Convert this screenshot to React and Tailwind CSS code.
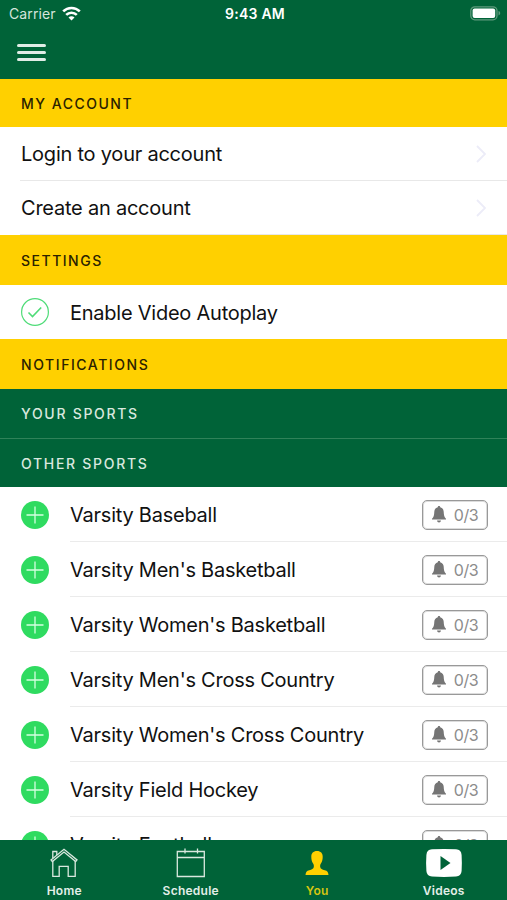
const SPORTS = [
  "Varsity Baseball",
  "Varsity Men's Basketball",
  "Varsity Women's Basketball",
  "Varsity Men's Cross Country",
  "Varsity Women's Cross Country",
  "Varsity Field Hockey",
  "Varsity Football",
];

function StatusBar() {
  return (
    <div className="grid h-7 grid-cols-3 items-center pr-[6px] pl-[9px] text-white">
      <div className="flex items-center gap-[6px]">
        <span className="text-[14px] leading-none tracking-[0.1px] text-[#d5e5dc]">Carrier</span>
        <svg className="-mt-[2px]" width="19" height="15" viewBox="0 0 19 15" fill="none" stroke="currentColor" strokeWidth="2.6">
          <path d="M1.2 5.400a11.800 11.800 0 0 1 16.600 0" />
          <path d="M4.200 8.900a7.500 7.500 0 0 1 10.600 0" />
          <path d="M9.500 14.500 6.500 11.500a4.200 4.200 0 0 1 6 0z" fill="currentColor" stroke="none" />
        </svg>
      </div>
      <span className="text-center text-[14px] leading-none font-semibold tracking-[0.250px] whitespace-nowrap">9:43 AM</span>
      <svg className="-mt-px justify-self-end" width="31" height="15" viewBox="0 0 31 15">
        <rect x="0.800" y="0.800" width="26.200" height="13" rx="4" fill="none" stroke="#5e9a7c" strokeWidth="1.300" />
        <rect x="2.600" y="2.600" width="22.600" height="9.400" rx="2" fill="#fff" />
        <path d="M28.500 5v4.400c1.100-.4 1.700-1.200 1.700-2.200s-.6-1.800-1.700-2.200z" fill="#5e9a7c" />
      </svg>
    </div>
  );
}

function Header() {
  return (
    <header className="h-[79px] shrink-0 bg-[#006338]">
      <StatusBar />
      <button aria-label="Menu" className="mt-4 ml-[17px] grid w-[29px] gap-[4.500px]">
        <span className="h-[2.500px] rounded-full bg-[#e0ede6]" />
        <span className="h-[2.500px] rounded-full bg-[#e0ede6]" />
        <span className="h-[2.500px] rounded-full bg-[#e0ede6]" />
      </button>
    </header>
  );
}

function SectionTitle({ children, className }) {
  return (
    <h2 className={`flex shrink-0 items-center pl-[21px] text-[14px] font-medium ${className}`}>
      {children}
    </h2>
  );
}

function AccountRow({ label }) {
  return (
    <div className="h-[54px] shrink-0 pl-5">
      <div className="flex h-full items-center justify-between border-b border-[#e8e8e8] pt-px pr-5 pl-px">
        <span className="text-[20px] tracking-[-0.230px]">{label}</span>
        <svg width="11" height="18" viewBox="0 0 11 18" fill="none" stroke="#ececf8" strokeWidth="1.800">
          <path d="m1 1 8 8-8 8" />
        </svg>
      </div>
    </div>
  );
}

function BellBadge() {
  return (
    <div className="flex h-[30px] w-[66px] items-center justify-center gap-[8px] rounded-[5px] border border-[#999] text-[#8c8c8c] shadow-[inset_0_0_0_1px_#dcdcdc]">
      <svg width="14" height="17" viewBox="0 0 14 17" fill="#757575">
        <path d="M7 0c.8 0 1.200.5 1.200 1.300 2.300.6 3.400 2.300 3.500 4.500.1 3.500.6 5.400 2.300 7v.8H0v-.8c1.700-1.600 2.200-3.500 2.300-7C2.400 3.600 3.500 1.900 5.800 1.300 5.800.5 6.200 0 7 0z" />
        <path d="M5 14.400h4c-.2 1.300-.9 2-2 2s-1.800-.7-2-2z" />
      </svg>
      <span className="text-[16px] leading-none tracking-[-0.400px]">0/3</span>
    </div>
  );
}

function SportRow({ name }) {
  return (
    <li className="flex h-[55px] shrink-0 pl-[21px]">
      <div className="flex w-[49px] shrink-0 items-center">
        <svg width="28" height="28" viewBox="0 0 28 28">
          <circle cx="14" cy="14" r="14" fill="#2fdb60" />
          <path d="M14 5.500v17M5.500 14h17" stroke="#d5ffe0" strokeWidth="1.300" />
        </svg>
      </div>
      <div className="flex flex-1 items-center justify-between border-b border-[#ebebeb] pt-px pr-[19px]">
        <span className="pt-px text-[20px] tracking-[-0.240px] whitespace-nowrap">{name}</span>
        <BellBadge />
      </div>
    </li>
  );
}

function HomeIcon() {
  return (
    <svg width="28" height="30" viewBox="0 0 28 30" fill="none" stroke="#d9e8df" strokeWidth="1.300">
      <path d="M1 11.900 14 1.300l13 10.600-1.300 1.600L14 4 2.300 13.500z" />
      <path d="M2.800 10V3.500h4v3.400M2.800 13V28.300h6.400V18.300h9v10h7V13" />
    </svg>
  );
}

function CalendarIcon() {
  return (
    <svg width="30" height="30" viewBox="0 0 30 30" fill="none" stroke="#d9e8df" strokeWidth="1.300">
      <path d="M1.300 3.500h27v25h-27zM1.300 9.500h27M9 .5v5M21.500.5v5" />
    </svg>
  );
}

function PersonIcon() {
  return (
    <svg width="24" height="24" viewBox="0 0 24 24" fill="#ffd000">
      <path d="M12 0c3.800 0 5.700 2.300 5.700 5.700 0 2.300-.4 4.800-1.800 6.800-.7 1.200-.9 2.200-.7 3.500.3 1.800 2 2.500 4.500 3.200 2.600.7 3.600 1.800 3.800 4.800H.5c.2-3 1.200-4.100 3.800-4.800 2.500-.7 4.200-1.400 4.500-3.200.2-1.300 0-2.300-.7-3.500-1.400-2-1.800-4.500-1.800-6.800C6.300 2.300 8.200 0 12 0z" />
    </svg>
  );
}

function VideoIcon() {
  return (
    <svg width="38" height="30" viewBox="0 0 38 30">
      <path d="M7 1.300Q19 .5 31 1.300 36.200 1.600 36.600 7q.5 8 0 16-.4 5.200-5.600 5.500-12 .8-24 0Q1.800 28.200 1.400 23q-.6-8 0-16Q1.800 1.600 7 1.300z" fill="#fff" />
      <path d="m15.500 8 10 7-10 7z" fill="#006338" />
    </svg>
  );
}

const TABS = [
  { label: "Home", Icon: HomeIcon },
  { label: "Schedule", Icon: CalendarIcon },
  { label: "You", Icon: PersonIcon, active: true },
  { label: "Videos", Icon: VideoIcon },
];

function TabBar() {
  return (
    <nav className="grid h-[60px] shrink-0 grid-cols-4 bg-[#006338] pl-px">
      {TABS.map(({ label, Icon, active }) => (
        <div key={label} className="flex flex-col items-center pt-2">
          <div className="flex h-[30px] items-center justify-center">
            <Icon />
          </div>
          <span className={`mt-[5px] text-[12px] leading-[15px] font-semibold tracking-[0.250px] ${active ? "text-[#d6c510]" : "text-[#e4efe9]"}`}>
            {label}
          </span>
        </div>
      ))}
    </nav>
  );
}

export default function App() {
  return (
    <div className="flex h-[900px] w-[507px] flex-col overflow-hidden bg-white font-[Inter,sans-serif] text-[#111]">
      <Header />
      <main className="flex min-h-0 flex-1 flex-col overflow-hidden">
        <SectionTitle className="h-12 bg-[#ffd000] tracking-[1.500px] text-[#2a2200]">MY ACCOUNT</SectionTitle>
        <AccountRow label="Login to your account" />
        <AccountRow label="Create an account" />
        <SectionTitle className="h-[50px] bg-[#ffd000] tracking-[1.500px] text-[#2a2200]">SETTINGS</SectionTitle>
        <div className="flex h-[54px] shrink-0 items-center pl-[21px]">
          <svg className="mr-[21px]" width="28" height="28" viewBox="0 0 28 28" fill="none" stroke="#4fdc78">
            <circle cx="14" cy="14" r="13.400" strokeWidth="1.200" />
            <path d="m7.500 14.500 4 4 8.700-9" strokeWidth="1.600" />
          </svg>
          <span className="pt-px text-[20px] tracking-[-0.240px]">Enable Video Autoplay</span>
        </div>
        <SectionTitle className="h-[50px] bg-[#ffd000] tracking-[1.570px] text-[#2a2200]">NOTIFICATIONS</SectionTitle>
        <SectionTitle className="h-[50px] border-b border-[#2f8259] bg-[#006338] tracking-[1.700px] text-[#d9e8df]">YOUR SPORTS</SectionTitle>
        <SectionTitle className="h-12 bg-[#006338] tracking-[1.700px] text-[#d9e8df]">OTHER SPORTS</SectionTitle>
        <ul className="flex flex-col">
          {SPORTS.map((name) => (
            <SportRow key={name} name={name} />
          ))}
        </ul>
      </main>
      <TabBar />
    </div>
  );
}
